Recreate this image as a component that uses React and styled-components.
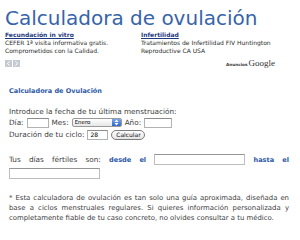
import React from "react";
import styled, { createGlobalStyle } from "styled-components";

const GlobalStyle = createGlobalStyle`
  body {
    margin: 0;
    background: #ffffff;
    font-family: "DejaVu Sans", Verdana, sans-serif;
  }
`;

export default function App() {
  return (
    <>
      <GlobalStyle />
      <Page>
        <Title>Calculadora de ovulación</Title>
        <Ads>
          <AdGrid>
            <Ad>
              <AdLink href="#">Fecundación in vitro</AdLink>
              <AdText>
                CEFER 1ª visita informativa gratis.
                <br />
                Comprometidos con la Calidad.
              </AdText>
            </Ad>
            <Ad>
              <AdLink href="#">Infertilidad</AdLink>
              <AdText>
                Tratamientos de Infertilidad FIV Huntington
                <br />
                Reproductive CA USA
              </AdText>
            </Ad>
          </AdGrid>
          <AdFooter>
            <Arrows>
              <ArrowBtn>
                <svg width="7" height="7" viewBox="0 0 7 7">
                  <path d="M4.6 1.5 L2.3 3.5 L4.6 5.5" fill="none" stroke="#fff" strokeWidth="1" />
                </svg>
              </ArrowBtn>
              <ArrowBtn>
                <svg width="7" height="7" viewBox="0 0 7 7">
                  <path d="M2.4 1.5 L4.7 3.5 L2.4 5.5" fill="none" stroke="#fff" strokeWidth="1" />
                </svg>
              </ArrowBtn>
            </Arrows>
            <AdsBy>
              <AdsLabel>Anuncios</AdsLabel>
              <GoogleWord>Google</GoogleWord>
            </AdsBy>
          </AdFooter>
        </Ads>

        <Calc>
          <CalcHeading>Calculadora de Ovulación</CalcHeading>
          <Intro>Introduce la fecha de tu última menstruación:</Intro>
          <FieldRow>
            <Label>Día:</Label>
            <Field $w={22} />
            <Label>Mes:</Label>
            <SelectBox>
              <MonthSelect defaultValue="Enero">
                <option>Enero</option>
                <option>Febrero</option>
                <option>Marzo</option>
              </MonthSelect>
              <SelectCap>
                <svg width="5" height="7" viewBox="0 0 5 7">
                  <path d="M0.5 3 L2.5 0.6 L4.5 3 Z M0.5 4 L2.5 6.4 L4.5 4 Z" fill="#fff" />
                </svg>
              </SelectCap>
            </SelectBox>
            <Label>Año:</Label>
            <Field $w={28} />
          </FieldRow>
          <FieldRow>
            <Label>Duración de tu ciclo:</Label>
            <Field $w={21} defaultValue="28" />
            <CalcButton>Calcular</CalcButton>
          </FieldRow>
          <Result>
            Tus días fértiles son: <Strong>desde el</Strong> <ResultField /> <Strong>hasta el</Strong>{" "}
            <ResultField />
          </Result>
          <Note>
            * Esta calculadora de ovulación es tan solo una guía aproximada, diseñada en base a ciclos
            menstruales regulares. Si quieres información personalizada y completamente fiable de tu
            caso concreto, no olvides consultar a tu médico.
          </Note>
        </Calc>
      </Page>
    </>
  );
}

const Page = styled.div`
  width: 300px;
  height: 240px;
  overflow: hidden;
  padding: 8px 5px 0;
  box-sizing: border-box;
`;

const Title = styled.h1`
  margin: 0;
  font-size: 20px;
  line-height: 20px;
  font-weight: normal;
  color: #3763aa;
  white-space: nowrap;
`;

const Ads = styled.div`
  margin-top: 2px;
  width: 270px;
`;

const AdGrid = styled.div`
  display: grid;
  grid-template-columns: 136px 1fr;
`;

const Ad = styled.div`
  display: flex;
  flex-direction: column;
`;

const AdLink = styled.a`
  font-size: 6px;
  line-height: 9px;
  font-weight: bold;
  color: #1d3b7c;
  text-decoration: underline;
`;

const AdText = styled.div`
  font-size: 6px;
  line-height: 8px;
  color: #2a2a2a;
  white-space: nowrap;
`;

const AdFooter = styled.div`
  display: flex;
  justify-content: space-between;
  align-items: center;
  margin-top: 4px;
  height: 8px;
`;

const Arrows = styled.div`
  display: flex;
  gap: 1px;
`;

const ArrowBtn = styled.span`
  display: flex;
  width: 7px;
  height: 7px;
  background: #c6cad3;
`;

const AdsBy = styled.div`
  display: flex;
  align-items: baseline;
  gap: 1px;
  color: #333333;
`;

const AdsLabel = styled.span`
  font-size: 4.2px;
  font-weight: bold;
`;

const GoogleWord = styled.span`
  font-family: "Liberation Serif", serif;
  font-size: 9px;
`;

const Calc = styled.div`
  margin-top: 20px;
  padding-left: 4px;
  width: 280px;
  color: #3d3d3d;
`;

const CalcHeading = styled.h2`
  margin: 0;
  font-size: 6.5px;
  line-height: 8px;
  font-weight: bold;
  color: #2f5aa6;
`;

const Intro = styled.p`
  margin: 11.5px 0 0;
  font-size: 7.3px;
  line-height: 9px;
`;

const FieldRow = styled.div`
  display: flex;
  align-items: center;
  gap: 3px;
  height: 10px;
  margin-top: 2px;
  font-size: 7.3px;
`;

const Label = styled.span`
  white-space: nowrap;
`;

const Field = styled.input`
  box-sizing: border-box;
  width: ${(p) => p.$w}px;
  height: 10px;
  margin: 0;
  padding: 0 2px;
  border: 1px solid #b2b2b2;
  border-top-color: #8c8c8c;
  background: #fff;
  font-family: "DejaVu Sans", sans-serif;
  font-size: 6px;
  color: #000;
  outline: none;
`;

const SelectBox = styled.span`
  display: inline-flex;
  box-sizing: border-box;
  width: 50px;
  height: 9px;
  border: 1px solid #9a9a9a;
  border-radius: 2px;
  overflow: hidden;
  background: linear-gradient(#ffffff, #e6e6e6);
`;

const MonthSelect = styled.select`
  appearance: none;
  flex: 1;
  min-width: 0;
  margin: 0;
  padding: 0 0 0 2px;
  border: none;
  background: transparent;
  font-family: "DejaVu Sans", sans-serif;
  font-size: 5.5px;
  line-height: 7px;
  color: #000;
  outline: none;
`;

const SelectCap = styled.span`
  display: flex;
  align-items: center;
  justify-content: center;
  width: 9px;
  background: linear-gradient(#7aa6ec, #2f66cc);
`;

const CalcButton = styled.button`
  box-sizing: border-box;
  width: 34px;
  height: 10px;
  margin: 0;
  padding: 0;
  border: 1px solid #7c7c7c;
  border-radius: 6px;
  background: linear-gradient(#ffffff, #e4e4e4);
  font-family: "DejaVu Sans", sans-serif;
  font-size: 6px;
  line-height: 8px;
  color: #111;
`;

const Result = styled.p`
  margin: 13px 0 0;
  font-size: 7.3px;
  line-height: 13px;
  text-align: justify;
  text-align-last: left;
`;

const Strong = styled.b`
  font-size: 6.6px;
  color: #2f5aa6;
`;

const ResultField = styled.input`
  box-sizing: border-box;
  width: 91px;
  height: 11px;
  margin: 0;
  padding: 0;
  vertical-align: middle;
  border: 1px solid #bdbdbd;
  border-top-color: #959595;
  background: #fff;
  outline: none;
`;

const Note = styled.p`
  margin: 13px 0 0;
  font-size: 6.9px;
  line-height: 10px;
  text-align: justify;
`;
